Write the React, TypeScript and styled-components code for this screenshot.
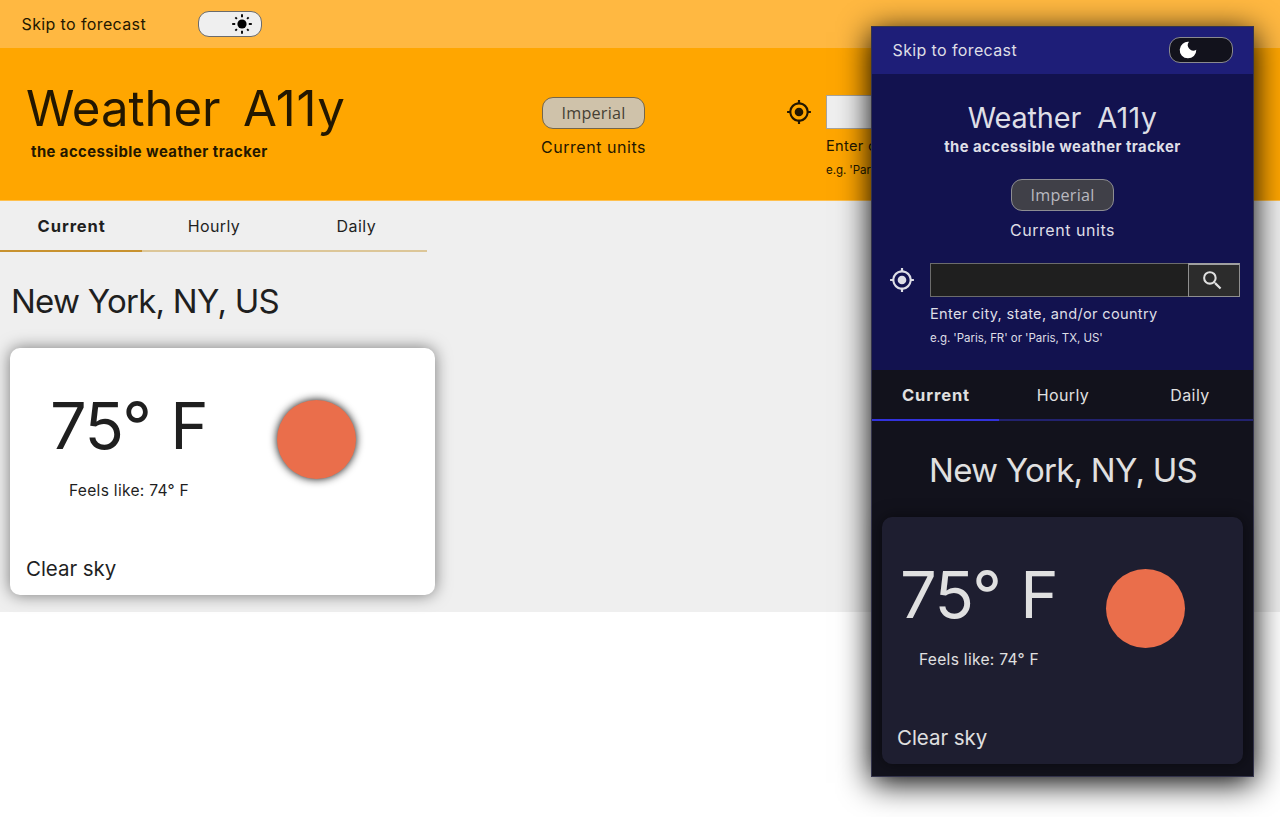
import React from "react";
import styled, { createGlobalStyle, css, ThemeProvider, useTheme } from "styled-components";
import { MdMyLocation, MdSearch } from "react-icons/md";

const light = {
  compact: false,
  bar: "#ffb841",
  header: "#ffa600",
  main: "#efefef",
  card: "#ffffff",
  ink: "#1f1f1f",
  headerInk: "#231700",
  toggleBg: "#efefef",
  toggleBorder: "#6b6b6b",
  unitBg: "#cfc2aa",
  unitInk: "#463f33",
  unitBorder: "#75664a",
  inputBg: "#efefef",
  inputBorder: "#a8a49c",
  tabActive: "#c8922f",
  tabIdle: "#dcc698",
  cardShadow: "0 0 16px rgba(0, 0, 0, 0.5)",
  sunShadow: "0 0 9px rgba(0, 0, 0, 0.95)",
};

type AppTheme = typeof light;

const dark: AppTheme = {
  compact: true,
  bar: "#1e1e78",
  header: "#12124f",
  main: "#12121c",
  card: "#1e1e30",
  ink: "#e0e0e0",
  headerInk: "#dedee6",
  toggleBg: "#12121c",
  toggleBorder: "#8a8a8e",
  unitBg: "#404048",
  unitInk: "#b9b9c0",
  unitBorder: "#8d8d92",
  inputBg: "#1f1f1f",
  inputBorder: "#6c6c6c",
  tabActive: "#3232dc",
  tabIdle: "#22226e",
  cardShadow: "0 0 16px rgba(0, 0, 0, 0.5)",
  sunShadow: "none",
};

const GlobalStyle = createGlobalStyle`
  body { margin: 0; background: #fff; }
  *, *::before, *::after { box-sizing: border-box; }
`;

const Stage = styled.div`
  position: relative;
  width: 1280px;
  height: 817px;
  overflow: hidden;
  font-family: Inter, "Liberation Sans", sans-serif;
`;

const Desktop = styled.div`
  height: 612px;
  background: ${(p) => p.theme.main};
`;

const Phone = styled.div`
  position: absolute;
  left: 871px;
  top: 26px;
  width: 383px;
  height: 751px;
  border: 1px solid #34344c;
  background: ${(p) => p.theme.main};
  box-shadow: 0 6px 30px #000;
`;

const Text = styled.span<{ $size: number; $track?: number; $bold?: boolean; $line?: number }>`
  display: block;
  margin: 0;
  white-space: nowrap;
  font-size: ${(p) => p.$size}px;
  letter-spacing: ${(p) => p.$track ?? 0}px;
  font-weight: ${(p) => (p.$bold ? 700 : 400)};
  line-height: ${(p) => p.$line ?? 20}px;
`;

const TopBar = styled.div`
  display: flex;
  align-items: center;
  justify-content: ${(p) => (p.theme.compact ? "space-between" : "flex-start")};
  gap: 52px;
  height: ${(p) => (p.theme.compact ? 47 : 48)}px;
  padding: ${(p) => (p.theme.compact ? "0 20px 1px 20.5px" : "0 21.5px 1px")};
  background: ${(p) => p.theme.bar};
  color: ${(p) => p.theme.headerInk};
`;

const Toggle = styled.button`
  display: flex;
  align-items: center;
  justify-content: ${(p) => (p.theme.compact ? "flex-start" : "flex-end")};
  width: 64px;
  height: 26px;
  padding: 0 8px;
  border: 1px solid ${(p) => p.theme.toggleBorder};
  border-radius: 11px;
  background: ${(p) => p.theme.toggleBg};
`;

const Header = styled.header`
  display: flex;
  color: ${(p) => p.theme.headerInk};
  background: ${(p) => p.theme.header};
  ${(p) =>
    p.theme.compact
      ? css`
          flex-direction: column;
          align-items: center;
          height: 296px;
          padding-top: 27px;
        `
      : css`
          height: 153px;
          border-bottom: 1px solid #ffc04d;
        `}
`;

const Brand = styled.div`
  display: flex;
  flex-direction: column;
  ${(p) =>
    p.theme.compact
      ? css`
          align-items: center;
        `
      : css`
          width: 541px;
          padding: 31px 0 0 26px;
        `}
`;

const Title = styled.h1`
  display: flex;
  gap: ${(p) => (p.theme.compact ? 16 : 22.5)}px;
  margin: 0;
`;

const Tagline = styled.div`
  padding: ${(p) => (p.theme.compact ? "2px 0 0" : "5px 0 0 5px")};
`;

const Units = styled.div`
  display: flex;
  flex-direction: column;
  align-items: center;
  ${(p) =>
    p.theme.compact
      ? css`
          gap: 9px;
          padding-top: 22px;
        `
      : css`
          gap: 8px;
          width: 105px;
          padding-top: 49px;
        `}
`;

const UnitButton = styled.button`
  width: 103px;
  height: 32px;
  padding: 0;
  border: 1px solid ${(p) => p.theme.unitBorder};
  border-radius: 11px;
  background: ${(p) => p.theme.unitBg};
  color: ${(p) => p.theme.unitInk};
  font: 16.2px/30px "Open Sans", sans-serif;
  letter-spacing: 0.2px;
`;

const Search = styled.div`
  display: flex;
  align-items: flex-start;
  ${(p) =>
    p.theme.compact
      ? css`
          gap: 15px;
          width: 381px;
          padding: 23px 0 0 17px;
        `
      : css`
          gap: 14px;
          padding: 47px 0 0 140px;
        `}
`;

const Locate = styled.div`
  display: flex;
  width: 26px;
  height: 34px;
  align-items: center;
`;

const Field = styled.div`
  display: flex;
  flex-direction: column;
  width: ${(p) => (p.theme.compact ? "310px" : "48px")};
  overflow: hidden;
`;

const InputRow = styled.div`
  display: flex;
  height: 34px;
  margin-bottom: 7px;
`;

const Input = styled.div`
  flex: none;
  width: 258px;
  border: 1px solid ${(p) => p.theme.inputBorder};
  border-right-width: 0;
  background: ${(p) => p.theme.inputBg};
`;

const SearchButton = styled.button`
  display: flex;
  flex: none;
  align-items: center;
  justify-content: center;
  width: 52px;
  padding: 0 3px 0 0;
  border: 1px solid #8f8f8f;
  border-top: 2px solid #a0a0a0;
  background: #2c2c2c;
  color: ${(p) => p.theme.ink};
`;

const Tabs = styled.nav`
  display: flex;
  width: ${(p) => (p.theme.compact ? "100%" : "427px")};
  height: 51px;
`;

const Tab = styled.div<{ $active?: boolean }>`
  flex: 1;
  display: flex;
  justify-content: center;
  padding: 15px 0 0 1px;
  border-bottom: 2px solid ${(p) => (p.$active ? p.theme.tabActive : p.theme.tabIdle)};
  color: ${(p) => p.theme.ink};
`;

const Forecast = styled.section`
  display: flex;
  flex-direction: column;
  align-items: ${(p) => (p.theme.compact ? "center" : "flex-start")};
  padding: ${(p) => (p.theme.compact ? "29px 10px 0" : "29px 10px 0")};
  color: ${(p) => p.theme.ink};
`;

const City = styled(Text)`
  padding-left: 1px;
`;

const Card = styled.article`
  display: flex;
  flex-direction: column;
  justify-content: space-between;
  width: ${(p) => (p.theme.compact ? "361px" : "425px")};
  height: 247px;
  margin-top: 27px;
  padding: ${(p) => (p.theme.compact ? "43px 0 11px 15px" : "43px 0 11px 16px")};
  border-radius: 10px;
  background: ${(p) => p.theme.card};
  box-shadow: ${(p) => p.theme.cardShadow};
`;

const Conditions = styled.div`
  display: flex;
  padding-left: ${(p) => (p.theme.compact ? 1 : 22)}px;
`;

const Reading = styled.div`
  width: ${(p) => (p.theme.compact ? 208 : 229)}px;
`;

const Temperature = styled.div`
  display: flex;
  gap: 20px;
  padding-left: 2px;
`;

const FeelsLike = styled.div`
  padding: 20px 0 0 21px;
`;

const Sun = styled.div`
  width: 79px;
  height: 79px;
  margin-top: 9px;
  border-radius: 50%;
  background: #ea6e4b;
  box-shadow: ${(p) => p.theme.sunShadow};
`;

const SunIcon = () => (
  <svg width="22" height="22" viewBox="-11 -11 22 22">
    <circle r="4.6" fill="#000" />
    <g stroke="#000" strokeWidth="1.9" strokeLinecap="butt">
      {[0, 45, 90, 135, 180, 225, 270, 315].map((a) => (
        <line key={a} x1={a % 90 ? 7.2 : 6.8} x2={a % 90 ? 9.4 : 9.8} y1="0" y2="0" transform={`rotate(${a})`} />
      ))}
    </g>
  </svg>
);

const MoonIcon = () => (
  <svg width="20" height="20" viewBox="-10 -10 20 20">
    <path d="M1 -8.2A8.3 8.3 0 1 0 8.3 -.2A5.5 5.5 0 0 1 1 -8.2Z" fill="#fff" />
  </svg>
);

function PageHeader() {
  const { compact } = useTheme() as AppTheme;
  const size = compact ? 28.8 : 49.2;
  const line = compact ? 34 : 58;
  return (
    <Header>
      <Brand>
        <Title>
          <Text $size={size} $track={-0.1} $line={line}>Weather</Text>
          <Text $size={size} $track={compact ? 0.35 : 0.6} $line={line}>A11y</Text>
        </Title>
        <Tagline>
          <Text $size={14.8} $track={0.47} $bold>the accessible weather tracker</Text>
        </Tagline>
      </Brand>
      <Units>
        <UnitButton>Imperial</UnitButton>
        <Text $size={16} $track={0.55}>Current units</Text>
      </Units>
      <Search>
        <Locate><MdMyLocation size={26} /></Locate>
        <Field>
          <InputRow>
            <Input />
            <SearchButton aria-label="Search"><MdSearch size={25} /></SearchButton>
          </InputRow>
          <Text $size={14.6} $track={0.3}>Enter city, state, and/or country</Text>
          <Text $size={11.5} $track={-0.05} $line={28}>e.g. 'Paris, FR' or 'Paris, TX, US'</Text>
        </Field>
      </Search>
    </Header>
  );
}

function WeatherApp() {
  const { compact } = useTheme() as AppTheme;
  return (
    <>
      <TopBar>
        <Text $size={16} $track={0.38}>Skip to forecast</Text>
        <Toggle aria-label="Toggle theme">{compact ? <MoonIcon /> : <SunIcon />}</Toggle>
      </TopBar>
      <PageHeader />
      <Tabs>
        <Tab $active><Text $size={16.5} $track={0.9} $bold>Current</Text></Tab>
        <Tab><Text $size={16} $track={0.4}>Hourly</Text></Tab>
        <Tab><Text $size={16} $track={0.45}>Daily</Text></Tab>
      </Tabs>
      <Forecast>
        <City as="h2" $size={33} $track={-0.75} $line={40}>New York, NY, US</City>
        <Card>
          <Conditions>
            <Reading>
              <Temperature>
                <Text $size={65} $track={-1.7} $line={70}>75°</Text>
                <Text $size={65} $line={70}>F</Text>
              </Temperature>
              <FeelsLike>
                <Text $size={15.6} $track={0.28}>Feels like: 74° F</Text>
              </FeelsLike>
            </Reading>
            <Sun />
          </Conditions>
          <Text $size={20.5} $track={-0.05} $line={30}>Clear sky</Text>
        </Card>
      </Forecast>
    </>
  );
}

export default function App() {
  return (
    <Stage>
      <GlobalStyle />
      <ThemeProvider theme={light}>
        <Desktop><WeatherApp /></Desktop>
      </ThemeProvider>
      <ThemeProvider theme={dark}>
        <Phone><WeatherApp /></Phone>
      </ThemeProvider>
    </Stage>
  );
}
